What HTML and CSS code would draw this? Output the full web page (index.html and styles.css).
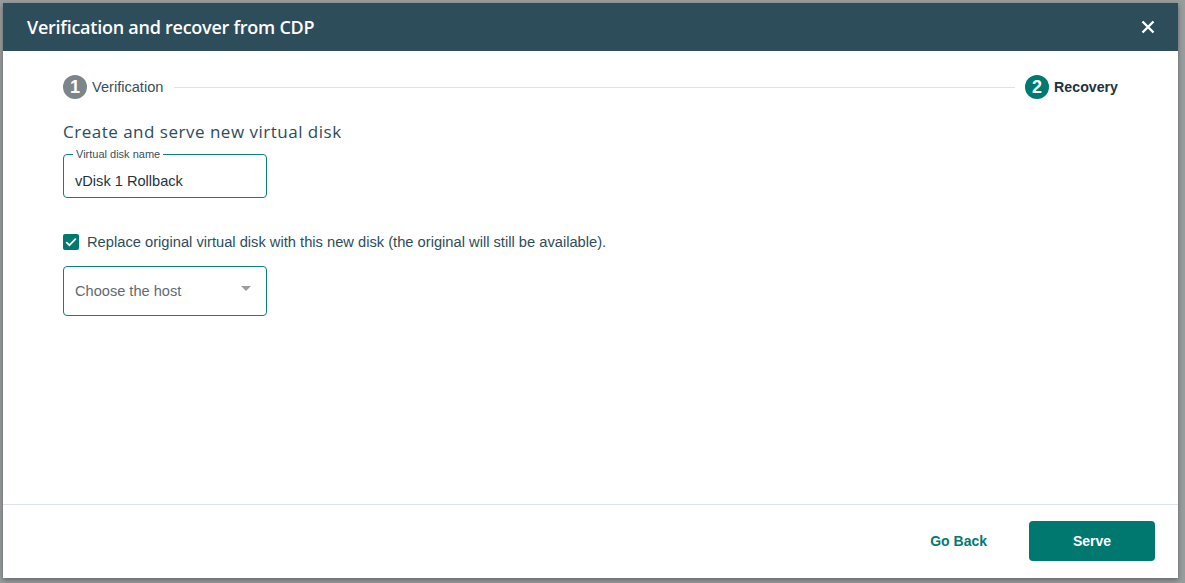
FILE: index.html
```html
<!DOCTYPE html>
<html>
<head>
<meta charset="utf-8">
<link rel="stylesheet" href="styles.css">
</head>
<body>
<div class="dialog">
  <header class="dlg-head">
    <h1 class="dlg-title">Verification and recover from CDP</h1>
    <button class="close" aria-label="Close">
      <svg width="14" height="14" viewBox="0 0 14 14"><path d="M1.5 1.5 L12.5 12.5 M12.5 1.5 L1.5 12.5" stroke="#fff" stroke-width="2.4" stroke-linecap="butt"/></svg>
    </button>
  </header>
  <main class="dlg-body">
    <div class="stepper">
      <div class="step done"><span class="num">1</span><span class="step-label">Verification</span></div>
      <div class="step-line"></div>
      <div class="step active"><span class="num">2</span><span class="step-label">Recovery</span></div>
    </div>
    <h2 class="section-title">Create and serve new virtual disk</h2>
    <fieldset class="field">
      <legend>Virtual disk name</legend>
      <div class="field-value">vDisk 1 Rollback</div>
    </fieldset>
    <label class="check">
      <span class="box"><svg width="12" height="10" viewBox="0 0 12 10"><path d="M1.2 5.2 L4.4 8.2 L10.8 1.6" fill="none" stroke="#fff" stroke-width="1.8"/></svg></span>
      <span class="check-label">Replace original virtual disk with this new disk (the original will still be available).</span>
    </label>
    <div class="select">
      <span class="placeholder">Choose the host</span>
      <span class="caret"></span>
    </div>
  </main>
  <footer class="dlg-foot">
    <button class="btn-text">Go Back</button>
    <button class="btn-primary">Serve</button>
  </footer>
</div>
</body>
</html>
```
FILE: styles.css
```css
* { box-sizing: border-box; }
html, body { margin: 0; height: 100%; }
body {
  background: #979c9d;
  padding: 3px 0 0 3px;
  font-family: "Liberation Sans", Arial, sans-serif;
  overflow: hidden;
}
.dialog {
  width: 1175px;
  height: 575px;
  background: #fff;
  display: flex;
  flex-direction: column;
  box-shadow: 0 2px 5px rgba(0,0,0,0.35);
}
.dlg-head {
  height: 48px;
  background: #2e4d5a;
  display: flex;
  align-items: center;
  justify-content: space-between;
  padding: 0 23px 0 24px;
  flex: none;
}
.dlg-title {
  margin: 0;
  color: #fff;
  font-family: "Open Sans", sans-serif;
  font-weight: 600;
  font-size: 18px;
  letter-spacing: -0.25px;
}
.close {
  background: none;
  border: 0;
  padding: 0;
  width: 14px;
  height: 14px;
  display: flex;
  cursor: pointer;
}
.dlg-body {
  flex: 1;
  padding: 24px 60px 0 60px;
}
.stepper {
  display: flex;
  align-items: center;
  height: 24px;
}
.step { display: flex; align-items: center; gap: 5px; }
.num {
  width: 24px; height: 24px;
  border-radius: 50%;
  color: #fff;
  font-weight: 700;
  font-size: 18px;
  display: flex; align-items: center; justify-content: center;
}
.done .num { background: #7c868a; }
.active .num { background: #00796f; }
.step-label { font-size: 14.6px; color: #3a4f5a; }
.active .step-label { font-weight: 700; color: #1d3340; font-size: 14.2px; }
.step-line {
  flex: 1;
  height: 1px;
  background: #dde3e6;
  margin: 1px 10px 0 11px;
}
.section-title {
  margin: 21px 0 0 0;
  font-family: "Open Sans", sans-serif;
  font-weight: 400;
  font-size: 17px;
  letter-spacing: 0.5px;
  color: #2e4d5a;
  line-height: 24px;
}
.field {
  margin: 5px 0 0 0;
  width: 204px;
  height: 49px;
  border: 1px solid #0f7f7b;
  border-radius: 4px;
  padding: 0 11px;
}
.field legend {
  font-size: 11px;
  color: #3a4f5a;
  padding: 0 3px;
  margin-left: -2px;
  line-height: 11px;
}
.field-value {
  font-size: 14.6px;
  color: #1d3340;
  line-height: 16px;
  margin-top: 13px;
}
.check {
  display: flex;
  align-items: center;
  gap: 8px;
  margin-top: 36px;
  height: 16px;
}
.box {
  width: 16px; height: 16px;
  background: #00796f;
  border-radius: 2px;
  display: flex; align-items: center; justify-content: center;
}
.check-label { font-size: 14.7px; color: #2e4d5a; }
.select {
  margin-top: 16px;
  width: 204px;
  height: 50px;
  border: 1px solid #0f7f7b;
  border-radius: 4px;
  display: flex;
  align-items: center;
  justify-content: space-between;
  padding: 0 15px 0 11px;
}
.placeholder { font-size: 14.6px; color: #5f6b70; }
.caret {
  width: 0; height: 0;
  border-left: 5px solid transparent;
  border-right: 5px solid transparent;
  border-top: 5px solid #9a9ea0;
  margin-top: -6px;
}
.dlg-foot {
  flex: none;
  height: 74px;
  border-top: 1px solid #dde3e6;
  display: flex;
  align-items: center;
  justify-content: flex-end;
  gap: 20px;
  padding: 0 23px 2px 0;
}
.btn-text {
  background: none;
  border: 0;
  font-family: "Liberation Sans", Arial, sans-serif;
  font-weight: 700;
  font-size: 14px;
  color: #007a74;
  padding: 0 22px;
  height: 40px;
}
.btn-primary {
  width: 126px;
  height: 40px;
  background: #00786f;
  border: 0;
  border-radius: 4px;
  color: #fff;
  font-family: "Liberation Sans", Arial, sans-serif;
  font-weight: 700;
  font-size: 14px;
}
```
